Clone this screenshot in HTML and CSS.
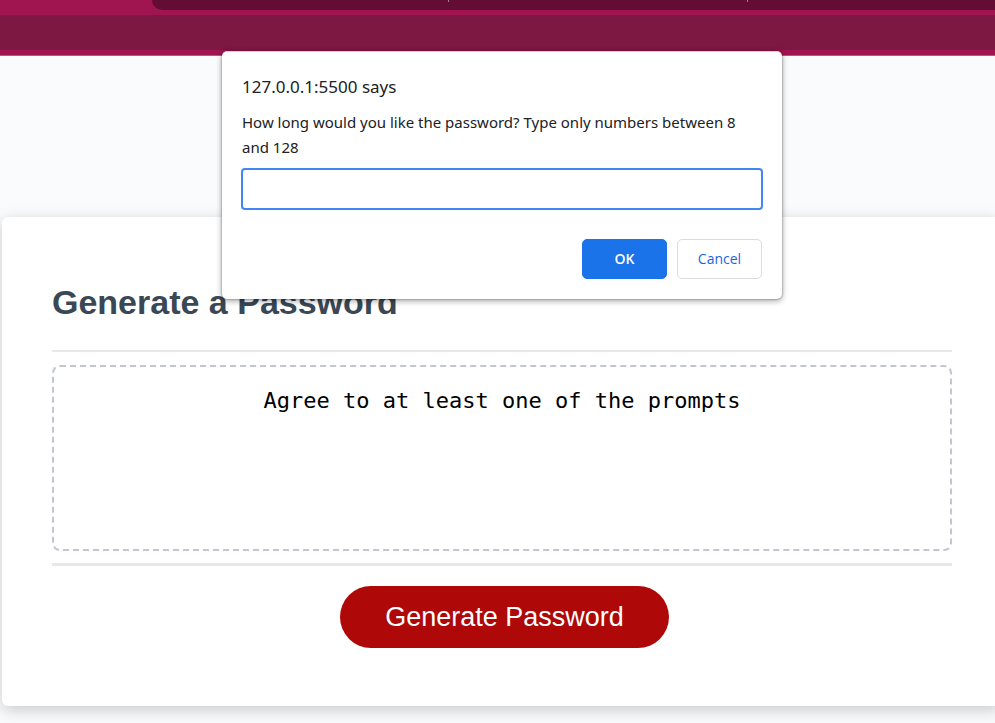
FILE: index.html
```
<!DOCTYPE html>
<html lang="en">
<head>
  <meta charset="utf-8">
  <meta name="viewport" content="width=device-width, initial-scale=1">
  <title>Password Generator</title>
  <link rel="stylesheet" href="styles.css">
</head>
<body>
  <header class="chrome">
    <div class="chrome-top">
      <div class="address-bar"><span class="tick"></span><span class="tick"></span></div>
    </div>
    <div class="bookmarks"></div>
  </header>

  <main class="page">
    <section class="card">
      <div class="card-header">
        <h1>Generate a Password</h1>
      </div>
      <div class="card-body">
        <textarea class="output" readonly aria-label="Your Secure Password">Agree to at least one of the prompts</textarea>
      </div>
      <div class="card-footer">
        <button type="button" class="generate">Generate Password</button>
      </div>
    </section>
  </main>

  <form class="prompt" role="dialog" aria-labelledby="prompt-title">
    <h2 id="prompt-title">127.0.0.1:5500 says</h2>
    <label for="prompt-input">How long would you like the password? Type only numbers between 8 and 128</label>
    <input id="prompt-input" type="text" autocomplete="off">
    <div class="prompt-actions">
      <button type="button" class="ok">OK</button>
      <button type="button" class="cancel">Cancel</button>
    </div>
  </form>
</body>
</html>
```
FILE: styles.css
```
* {
  box-sizing: border-box;
}

body {
  margin: 0;
  min-height: 100vh;
  overflow: hidden;
  background: #f9fbfd;
  font-family: "Liberation Sans", Arial, sans-serif;
}

.chrome {
  background: #a0154f;
  border-bottom: 1px solid #b55581;
}

.chrome-top {
  height: 15px;
  padding: 0 0 5px 152px;
}

.address-bar {
  display: flex;
  gap: 298px;
  height: 10px;
  padding-left: 296px;
  background: #640d32;
  border-bottom-left-radius: 10px;
}

.tick {
  width: 1px;
  height: 2px;
  background: #a77a8e;
}

.bookmarks {
  height: 40px;
  background: #7c1841;
  border-bottom: 5px solid #a0154f;
}

.page {
  padding: 161px 0 17px;
}

/* The card runs past the right edge of the window. */
.card {
  margin: 0 -7px 0 2px;
  padding: 50px;
  padding-bottom: 58px;
  background: #fff;
  border-radius: 6px;
  box-shadow: 0 4px 16px rgba(0, 0, 0, 0.2);
}

.card-header {
  padding: 14px 0 27px;
  border-bottom: 2px solid #e8e8e8;
}

.card-header h1 {
  margin: 0;
  color: #3a4855;
  font-size: 34px;
  line-height: 42px;
}

.card-body {
  padding: 13px 0 12px;
  border-bottom: 3px solid #e8e8e8;
}

.output {
  display: block;
  width: 100%;
  height: 186px;
  padding: 20px;
  resize: none;
  background: #fff;
  border: 2px dashed #c1c6d0;
  border-radius: 8px;
  color: #000;
  font: 22px/28px "DejaVu Sans Mono", monospace;
  text-align: center;
}

.card-footer {
  display: flex;
  justify-content: center;
  padding: 20px 0 0 5px;
}

.generate {
  height: 62px;
  padding: 0 45px;
  border: 0;
  border-radius: 31px;
  background: #ae0808;
  color: #fff;
  font: 27px/32px "Liberation Sans", Arial, sans-serif;
}

.prompt {
  position: absolute;
  top: 51px;
  left: 222px;
  width: 560px;
  padding: 22px 20px 20px;
  background: #fff;
  border-top: 1px solid #f0c4d6;
  border-radius: 5px;
  box-shadow: 0 0 2px rgba(0, 0, 0, 0.5), 0 2px 6px rgba(0, 0, 0, 0.35);
  color: #202124;
  font-family: "Noto Sans", "Open Sans", sans-serif;
}

.prompt h2 {
  margin: 0 0 11px;
  font-size: 17px;
  font-weight: 400;
  line-height: 25px;
}

.prompt label {
  display: block;
  font-size: 15px;
  line-height: 25px;
}

.prompt input {
  display: block;
  width: calc(100% + 2px);
  height: 42px;
  margin: 8px -1px 29px;
  padding: 0 10px;
  border: 2px solid #4285f4;
  border-radius: 4px;
  outline: 0;
  background: #fff;
  font: 15px/25px "Noto Sans", "Open Sans", sans-serif;
}

.prompt-actions {
  display: flex;
  justify-content: flex-end;
  gap: 10px;
}

.prompt-actions button {
  width: 85px;
  height: 40px;
  padding: 0;
  border: 1px solid #dadce0;
  border-radius: 5px;
  background: #fff;
  color: #1a66e0;
  font: 600 14px/20px "Open Sans", "Noto Sans", sans-serif;
}

.prompt-actions .ok {
  border-color: #1a73e8;
  background: #1a73e8;
  color: #fff;
}

.prompt-actions .cancel {
  font-weight: 500;
}
```
